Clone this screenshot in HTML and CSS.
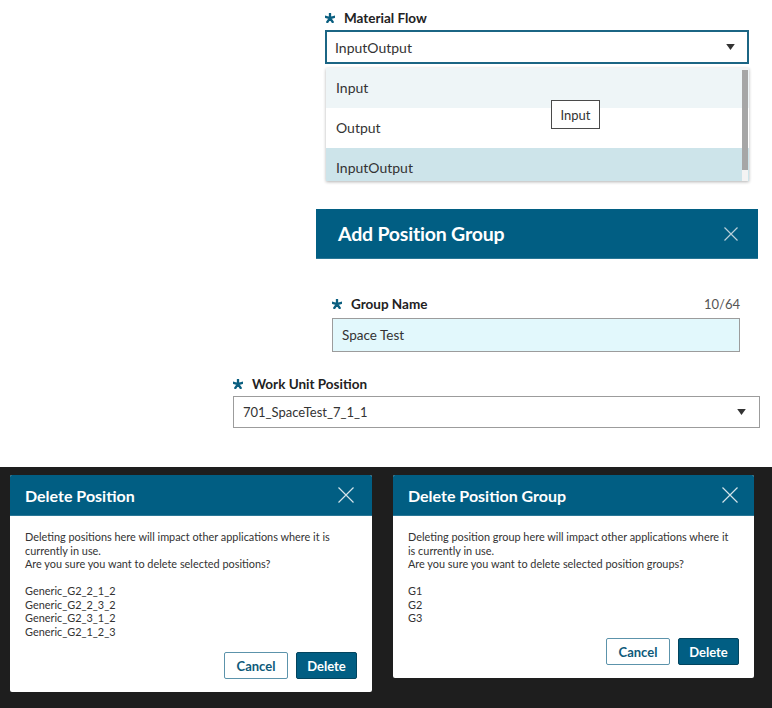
FILE: index.html
```html
<!DOCTYPE html>
<html lang="en">
<head>
<meta charset="utf-8">
<title>Dialogs</title>
<link rel="stylesheet" href="styles.css">
</head>
<body>
<div class="top">
  <section class="field mf">
    <div class="label"><svg class="star" viewBox="0 0 10 10"><path d="M5 5.2L5 0.5M5 5.2L9.4 3.8M5 5.2L7.7 9M5 5.2L2.3 9M5 5.2L0.6 3.8"/></svg><span>Material Flow</span></div>
    <div class="select select-active"><span>InputOutput</span><svg class="caret" viewBox="0 0 10 7"><path d="M0 0H10L5 7Z"/></svg></div>
    <div class="listbox">
      <div class="opt opt-hover">Input</div>
      <div class="opt">Output</div>
      <div class="opt opt-selected">InputOutput</div>
      <div class="scrollbar"><div class="thumb"></div></div>
      <div class="tooltip">Input</div>
    </div>
  </section>

  <header class="apg">
    <h2>Add Position Group</h2>
    <svg class="close close-sm" viewBox="0 0 14 14"><path d="M0.5 0.5L13.5 13.5M13.5 0.5L0.5 13.5"/></svg>
  </header>

  <section class="field gn">
    <div class="label label-row"><span class="label-main"><svg class="star" viewBox="0 0 10 10"><path d="M5 5.2L5 0.5M5 5.2L9.4 3.8M5 5.2L7.7 9M5 5.2L2.3 9M5 5.2L0.6 3.8"/></svg><span>Group Name</span></span><span class="counter">10/64</span></div>
    <div class="input">Space Test</div>
  </section>

  <section class="field wu">
    <div class="label"><svg class="star" viewBox="0 0 10 10"><path d="M5 5.2L5 0.5M5 5.2L9.4 3.8M5 5.2L7.7 9M5 5.2L2.3 9M5 5.2L0.6 3.8"/></svg><span>Work Unit Position</span></div>
    <div class="select select-plain"><span>701_SpaceTest_7_1_1</span><svg class="caret" viewBox="0 0 10 7"><path d="M0 0H10L5 7Z"/></svg></div>
  </section>
</div>

<div class="dark">
  <div class="dialog d1">
    <div class="dlg-head">
      <h3>Delete Position</h3>
      <svg class="close" viewBox="0 0 16 16"><path d="M0.5 0.5L15.5 15.5M15.5 0.5L0.5 15.5"/></svg>
    </div>
    <div class="dlg-body">
      <p>Deleting positions here will impact other applications where it is<br>currently in use.<br>Are you sure you want to delete selected positions?</p>
      <p class="items">Generic_G2_2_1_2<br>Generic_G2_2_3_2<br>Generic_G2_3_1_2<br>Generic_G2_1_2_3</p>
      <div class="actions"><button class="btn btn-cancel">Cancel</button><button class="btn btn-delete">Delete</button></div>
    </div>
  </div>
  <div class="dialog d2">
    <div class="dlg-head">
      <h3>Delete Position Group</h3>
      <svg class="close" viewBox="0 0 16 16"><path d="M0.5 0.5L15.5 15.5M15.5 0.5L0.5 15.5"/></svg>
    </div>
    <div class="dlg-body">
      <p>Deleting position group here will impact other applications where it<br>is currently in use.<br>Are you sure you want to delete selected position groups?</p>
      <p class="items">G1<br>G2<br>G3</p>
      <div class="actions"><button class="btn btn-cancel">Cancel</button><button class="btn btn-delete">Delete</button></div>
    </div>
  </div>
</div>
</body>
</html>
```

FILE: styles.css
```css
* { box-sizing: border-box; }
html, body { margin: 0; padding: 0; }
body {
  width: 772px;
  height: 708px;
  overflow: hidden;
  background: #fff;
  font-family: Lato, "Liberation Sans", sans-serif;
  color: #333;
}

.top {
  height: 467px;
  padding-top: 5px;
  background: #fff;
}

.field { display: flex; flex-direction: column; }

.label {
  display: flex;
  align-items: center;
  height: 25px;
  font-size: 13.5px;
  font-weight: 700;
  color: #222;
}
.star {
  width: 10px;
  height: 10px;
  margin-right: 9px;
  flex: none;
}
.star path { stroke: #0b5f80; stroke-width: 2.3; fill: none; stroke-linecap: round; }

.select {
  display: flex;
  align-items: center;
  justify-content: space-between;
  background: #fff;
  color: #333;
}
.caret { width: 9px; height: 6px; flex: none; }
.caret path { fill: #333; }

/* Material Flow */
.mf { margin-left: 325px; width: 424px; }
.select-active {
  height: 34px;
  border: 2px solid #1b6584;
  padding: 0 12px 0 8px;
  font-size: 14px;
}
.listbox {
  position: relative;
  margin-top: 4px;
  margin-left: 1px;
  width: 423px;
  height: 113px;
  overflow: hidden;
  background: #fff;
  box-shadow: 0 1px 3px rgba(0,0,0,0.3);
}
.opt {
  height: 40px;
  line-height: 40px;
  padding-left: 10px;
  font-size: 14px;
  color: #333;
}
.opt-hover { background: #eef5f7; }
.opt-selected { background: #cde4ea; }
.scrollbar {
  position: absolute;
  right: 1px;
  top: 0;
  bottom: 0;
  width: 6px;
  background: #f3f3f3;
}
.thumb {
  margin-top: 2px;
  height: 100px;
  background: #a6a6a6;
}
.tooltip {
  position: absolute;
  left: 225px;
  top: 32px;
  width: 49px;
  height: 29px;
  border: 1px solid #4a4a4a;
  background: #fff;
  font-size: 13px;
  color: #333;
  display: flex;
  align-items: center;
  justify-content: center;
}

/* Add Position Group header */
.apg {
  margin: 28px 0 0 316px;
  width: 442px;
  height: 50px;
  background: #015e83;
  border-bottom: 1px solid #2a7796;
  display: flex;
  align-items: center;
  justify-content: space-between;
  padding: 0 20px 0 22px;
}
.apg h2 {
  margin: 0;
  font-size: 19.5px;
  font-weight: 700;
  color: #fff;
  letter-spacing: -0.2px;
}
.close { width: 16px; height: 16px; flex: none; }
.close path { stroke: #d4e4ea; stroke-width: 1.2; fill: none; }
.close-sm { width: 14px; height: 14px; }
.close-sm path { stroke: #b9d0da; }

/* Group Name */
.gn { margin: 32px 0 0 332px; width: 408px; }
.label-row { justify-content: space-between; margin-bottom: 2px; }
.label-main { display: flex; align-items: center; }
.counter { font-size: 13px; font-weight: 400; color: #555; }
.input {
  height: 34px;
  border: 1px solid #9c9c9c;
  background: #e2f8fc;
  padding-left: 9px;
  display: flex;
  align-items: center;
  font-size: 13.5px;
  color: #333;
}

/* Work Unit Position */
.wu { margin: 19px 0 0 233px; width: 527px; }
.select-plain {
  height: 32px;
  border: 1px solid #9c9c9c;
  padding: 0 13px 0 9px;
  font-size: 13px;
}

/* Dark area with dialogs */
.dark {
  height: 241px;
  background: #1e1e1e;
  display: flex;
  align-items: flex-start;
  gap: 21px;
  padding: 8px 0 0 10px;
}
.dialog {
  background: #fff;
  border-radius: 2px;
  overflow: hidden;
}
.d1 { width: 362px; }
.d2 { width: 361px; }
.dlg-head {
  height: 41px;
  background: #015e83;
  border-bottom: 1px solid #2a7796;
  display: flex;
  align-items: center;
  justify-content: space-between;
  padding: 0 18px 0 15px;
}
.d2 .dlg-head { padding-right: 16px; }
.dlg-head h3 {
  margin: 0;
  font-size: 16px;
  font-weight: 700;
  color: #fff;
}
.dlg-body {
  padding: 14px 15px 13px 15px;
  font-size: 10.9px;
  line-height: 13.5px;
  color: #333;
}
.dlg-body p { margin: 0 0 13.5px 0; }
.dlg-body p.items { margin-bottom: 0; }
.actions {
  display: flex;
  justify-content: flex-end;
  gap: 8px;
  margin-top: 14px;
}
.d2 .actions { margin-top: 13.5px; }
.btn {
  height: 27px;
  border-radius: 2px;
  font-family: Lato, "Liberation Sans", sans-serif;
  font-size: 13px;
  font-weight: 700;
  padding: 0;
  cursor: pointer;
}
.btn-cancel {
  width: 64px;
  background: #fff;
  border: 1px solid #5c93ab;
  color: #0e5a7a;
}
.btn-delete {
  width: 61px;
  background: #015e83;
  border: 1px solid #02445e;
  color: #fff;
}
```
